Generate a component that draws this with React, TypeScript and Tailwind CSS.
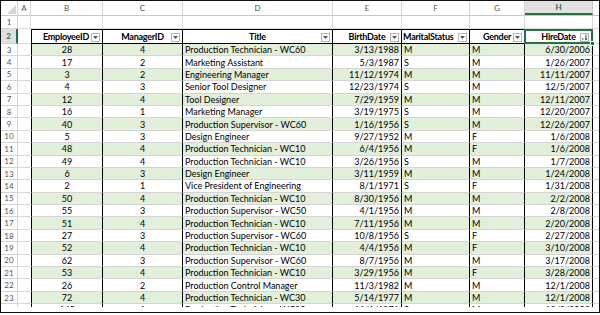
import React from "react";

type Row = [string, string, string, string, string, string, string];

const data: Row[] = [
  ["28", "4", "Production Technician - WC60", "3/13/1988", "M", "M", "6/30/2006"],
  ["17", "2", "Marketing Assistant", "5/3/1987", "S", "M", "1/26/2007"],
  ["3", "2", "Engineering Manager", "11/12/1974", "M", "M", "11/11/2007"],
  ["4", "3", "Senior Tool Designer", "12/23/1974", "S", "M", "12/5/2007"],
  ["12", "4", "Tool Designer", "7/29/1959", "M", "M", "12/11/2007"],
  ["16", "1", "Marketing Manager", "3/19/1975", "S", "M", "12/20/2007"],
  ["40", "3", "Production Supervisor - WC60", "1/16/1956", "S", "M", "12/26/2007"],
  ["5", "3", "Design Engineer", "9/27/1952", "M", "F", "1/6/2008"],
  ["48", "4", "Production Technician - WC10", "6/4/1956", "M", "F", "1/6/2008"],
  ["49", "4", "Production Technician - WC10", "3/26/1956", "S", "M", "1/7/2008"],
  ["6", "3", "Design Engineer", "3/11/1959", "M", "M", "1/24/2008"],
  ["2", "1", "Vice President of Engineering", "8/1/1971", "S", "F", "1/31/2008"],
  ["50", "4", "Production Technician - WC10", "8/30/1956", "M", "M", "2/2/2008"],
  ["55", "3", "Production Supervisor - WC50", "4/1/1956", "M", "M", "2/8/2008"],
  ["51", "4", "Production Technician - WC10", "7/11/1956", "M", "M", "2/20/2008"],
  ["27", "3", "Production Supervisor - WC60", "10/8/1956", "S", "F", "2/27/2008"],
  ["52", "4", "Production Technician - WC10", "4/4/1956", "M", "F", "3/10/2008"],
  ["62", "3", "Production Supervisor - WC60", "8/7/1956", "M", "M", "3/17/2008"],
  ["53", "4", "Production Technician - WC10", "3/29/1956", "M", "F", "3/28/2008"],
  ["26", "2", "Production Control Manager", "11/3/1982", "M", "M", "12/1/2008"],
  ["72", "4", "Production Technician - WC30", "5/14/1977", "M", "M", "12/1/2008"],
  ["145", "1", "Production Technician - WC30", "11/1/1971", "S", "M", "12/2/2008"],
];

function Drop() {
  return (
    <div className="absolute right-[2px] top-[3px] w-[9px] h-[9px] border border-[#b5b5b5] bg-white flex items-center justify-center">
      <svg width="5" height="3" viewBox="0 0 5 3">
        <polygon points="0,0 5,0 2.5,3" fill="#555" />
      </svg>
    </div>
  );
}

function SortDrop() {
  return (
    <div className="absolute right-[3px] top-[3px] w-[9px] h-[9px] border border-[#b5b5b5] bg-white flex items-center justify-center">
      <svg width="7" height="7" viewBox="0 0 7 7">
        <line x1="5" y1="0.5" x2="5" y2="6" stroke="#444" strokeWidth="1" />
        <polygon points="3.5,4.5 6.5,4.5 5,6.5" fill="#444" />
        <polygon points="0.5,4.5 3,4.5 1.75,6" fill="#444" />
      </svg>
    </div>
  );
}

export default function App() {
  return (
    <div className="w-[600px] h-[315px] bg-white font-['Lato',sans-serif]">
      <div className="w-[600px] h-[313px] border border-[#111] bg-white overflow-hidden">
        <div className="h-[306px] overflow-hidden">
          {/* column header band */}
          <div className="flex h-[15px] text-[8px] text-[#555] border-b border-[#c8c8c8]">
            <div className="w-[17px] border-r border-[#d4d4d4] relative">
              <svg className="absolute right-[1px] bottom-[1px]" width="9" height="9" viewBox="0 0 9 9">
                <polygon points="9,0 9,9 0,9" fill="#d6d6d6" />
              </svg>
            </div>
            <div className="w-[13px] border-r border-[#d4d4d4] flex items-center justify-center">A</div>
            <div className="w-[72px] border-r border-[#d4d4d4] flex items-center justify-center">B</div>
            <div className="w-[80px] border-r border-[#d4d4d4] flex items-center justify-center">C</div>
            <div className="w-[150px] border-r border-[#d4d4d4] flex items-center justify-center">D</div>
            <div className="w-[69px] border-r border-[#d4d4d4] flex items-center justify-center">E</div>
            <div className="w-[68px] border-r border-[#d4d4d4] flex items-center justify-center">F</div>
            <div className="w-[55px] border-r border-[#d4d4d4] flex items-center justify-center">G</div>
            <div className="w-[68px] bg-[#e1e1e1] text-[#217346] font-bold border-r border-[#c8c8c8] border-b-2 border-b-[#217346] flex items-center justify-center">H</div>
            <div className="flex-1"></div>
          </div>

          {/* row 1 */}
          <div className="flex h-[13px] text-[8px] text-[#555]">
            <div className="w-[17px] border-r border-b border-[#d4d4d4] flex items-center justify-center">1</div>
            <div className="w-[13px] border-r border-b border-[#d9d9d9]"></div>
            <div className="w-[72px] border-r border-b border-[#d9d9d9]"></div>
            <div className="w-[80px] border-r border-b border-[#d9d9d9]"></div>
            <div className="w-[150px] border-r border-b border-[#d9d9d9]"></div>
            <div className="w-[69px] border-r border-b border-[#d9d9d9]"></div>
            <div className="w-[68px] border-r border-b border-[#d9d9d9]"></div>
            <div className="w-[55px] border-r border-b border-[#d9d9d9]"></div>
            <div className="w-[68px] border-r border-b border-[#d9d9d9]"></div>
            <div className="flex-1 border-b border-[#d9d9d9]"></div>
          </div>

          {/* row 2 header */}
          <div className="flex h-[15px] text-[9px] font-bold text-black tracking-[-0.25px]">
            <div className="w-[17px] bg-[#e1e1e1] border-r-2 border-r-[#217346] border-b border-[#d4d4d4] flex items-center justify-center text-[8px] text-[#217346] tracking-normal">2</div>
            <div className="w-[13px] border-b border-[#d9d9d9]"></div>
            <div className="w-[72px] relative border border-black flex items-center justify-center">
              <span className="pr-[2px]">EmployeeID</span>
              <Drop />
            </div>
            <div className="w-[80px] relative border-y border-r border-black flex items-center justify-center">
              <span>ManagerID</span>
              <Drop />
            </div>
            <div className="w-[150px] relative border-y border-r border-black flex items-center justify-center">
              <span>Title</span>
              <Drop />
            </div>
            <div className="w-[69px] relative border-y border-r border-black flex items-center justify-center">
              <span>BirthDate</span>
              <Drop />
            </div>
            <div className="w-[68px] relative border-y border-r border-black flex items-center justify-start pl-[1px] overflow-hidden">
              <span className="whitespace-nowrap">MaritalStatus</span>
              <Drop />
            </div>
            <div className="w-[55px] relative border-y border-r border-black flex items-center justify-center">
              <span>Gender</span>
              <Drop />
            </div>
            <div className="w-[68px] relative border-y border-r border-black flex items-center justify-center">
              <span>HireDate</span>
              <SortDrop />
              <div className="absolute -left-[1px] -top-[1px] -right-[1px] -bottom-[1px] border-2 border-[#217346] pointer-events-none"></div>
              <div className="absolute -right-[3px] -bottom-[3px] w-[5px] h-[5px] bg-[#217346] border border-white"></div>
            </div>
            <div className="flex-1 border-b border-[#d9d9d9]"></div>
          </div>

          {/* data rows */}
          {data.map((r, i) => {
            const green = i % 2 === 0;
            const bg = green ? "bg-[#e2efda]" : "bg-white";
            const rowNum = i + 3;
            return (
              <div key={i} className="flex h-[12.4px] text-[9px] text-black leading-none">
                <div className="w-[17px] border-r border-b border-[#d4d4d4] flex items-center justify-center text-[8px] text-[#555]">{rowNum}</div>
                <div className="w-[13px] border-b border-[#d9d9d9]"></div>
                <div className={`w-[72px] ${bg} border-x border-black border-b border-b-[#d4d4d4] flex items-center justify-center`}>{r[0]}</div>
                <div className={`w-[80px] ${bg} border-r border-black border-b border-b-[#d4d4d4] flex items-center justify-center`}>{r[1]}</div>
                <div className={`w-[150px] ${bg} border-r border-black border-b border-b-[#d4d4d4] flex items-center pl-[2px] whitespace-nowrap`}>{r[2]}</div>
                <div className={`w-[69px] ${bg} border-r border-black border-b border-b-[#d4d4d4] flex items-center justify-end pr-[2px]`}>{r[3]}</div>
                <div className={`w-[68px] ${bg} border-r border-black border-b border-b-[#d4d4d4] flex items-center pl-[2px]`}>{r[4]}</div>
                <div className={`w-[55px] ${bg} border-r border-black border-b border-b-[#d4d4d4] flex items-center pl-[2px]`}>{r[5]}</div>
                <div className={`w-[68px] ${bg} border-r border-black border-b border-b-[#d4d4d4] flex items-center justify-end pr-[2px]`}>{r[6]}</div>
                <div className="flex-1 border-b border-[#d9d9d9]"></div>
              </div>
            );
          })}
        </div>
      </div>
    </div>
  );
}
